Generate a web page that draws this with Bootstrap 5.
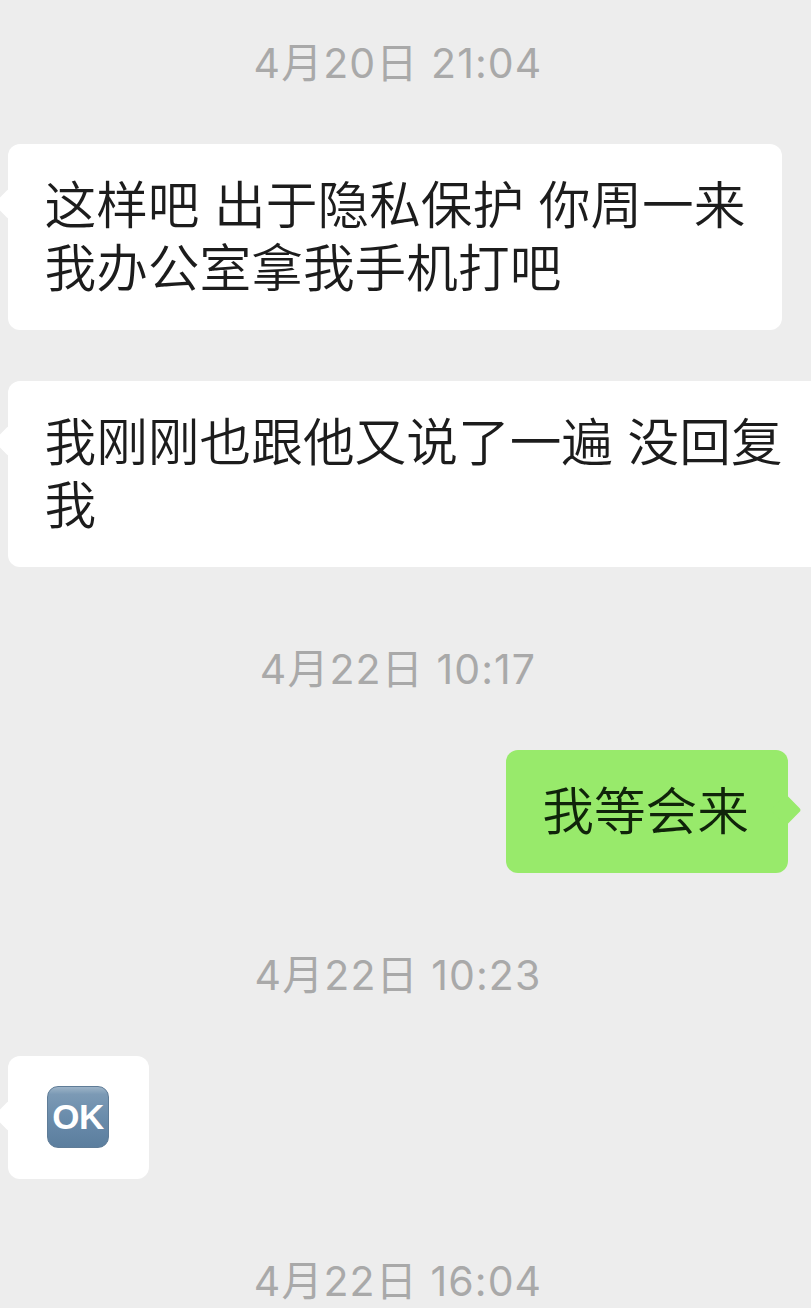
<!DOCTYPE html>
<html lang="zh">
<head>
<meta charset="utf-8">
<title>聊天记录</title>
<link href="https://cdn.jsdelivr.net/npm/bootstrap@5.3.0/dist/css/bootstrap.min.css" rel="stylesheet">
<style>
html,body{background:#ededed;overflow:hidden;height:1308px}
.chat-log{width:811px;padding-top:38px;font-family:"Noto Sans CJK SC","Liberation Sans",sans-serif}
.stamp{height:50px;line-height:50px;margin-bottom:56px;padding-right:15px;text-align:center;color:#a9a9a9;font-size:41px;letter-spacing:1.1px;font-family:"Inter","Noto Sans CJK SC",sans-serif}
.bubble{position:relative;border-radius:12px;padding:26px 30px 34px 36.5px;font-size:51.7px;line-height:63px;word-spacing:3px;font-weight:350;color:#1c1c1c;background:#fff}
.bubble::before{content:"";position:absolute;top:60px;width:22px;height:22px;background:inherit;border-radius:3px;transform:translateY(-50%) rotate(45deg)}
.from-them{margin-left:8px}
.from-them::before{left:-10px}
.from-me{margin-right:23px;padding-left:36px;padding-right:39px;background:#98ea6b;color:#10240a}
.from-me::before{right:-9px}
.wide-a{width:774px;margin-bottom:51px}
.wide-b{width:840px;margin-bottom:77px}
.fit{margin-bottom:77px}
.ok-bubble{width:141px;height:123px;padding:0 0 2px 39px}
.ok-tile{width:62px;height:62px;border-radius:11px;border:1.5px solid #5f7c97;background:linear-gradient(#9db4c8 0,#7c9ab5 12%,#6a8cab 50%,#5b7e9e 100%);color:#fff;font:700 35px/1 "Liberation Sans",sans-serif;letter-spacing:-.5px}
</style>
</head>
<body>
<main class="chat-log">
  <div class="stamp">4月20日 21:04</div>
  <div class="bubble from-them wide-a">这样吧 出于隐私保护 你周一来 我办公室拿我手机打吧</div>
  <div class="bubble from-them wide-b">我刚刚也跟他又说了一遍 没回复我</div>
  <div class="stamp">4月22日 10:17</div>
  <div class="d-flex justify-content-end fit"><div class="bubble from-me">我等会来</div></div>
  <div class="stamp">4月22日 10:23</div>
  <div class="bubble from-them ok-bubble fit d-flex align-items-center"><div class="ok-tile d-flex align-items-center justify-content-center">OK</div></div>
  <div class="stamp">4月22日 16:04</div>
</main>
<script src="https://cdn.jsdelivr.net/npm/bootstrap@5.3.0/dist/js/bootstrap.bundle.min.js"></script>
</body>
</html>
